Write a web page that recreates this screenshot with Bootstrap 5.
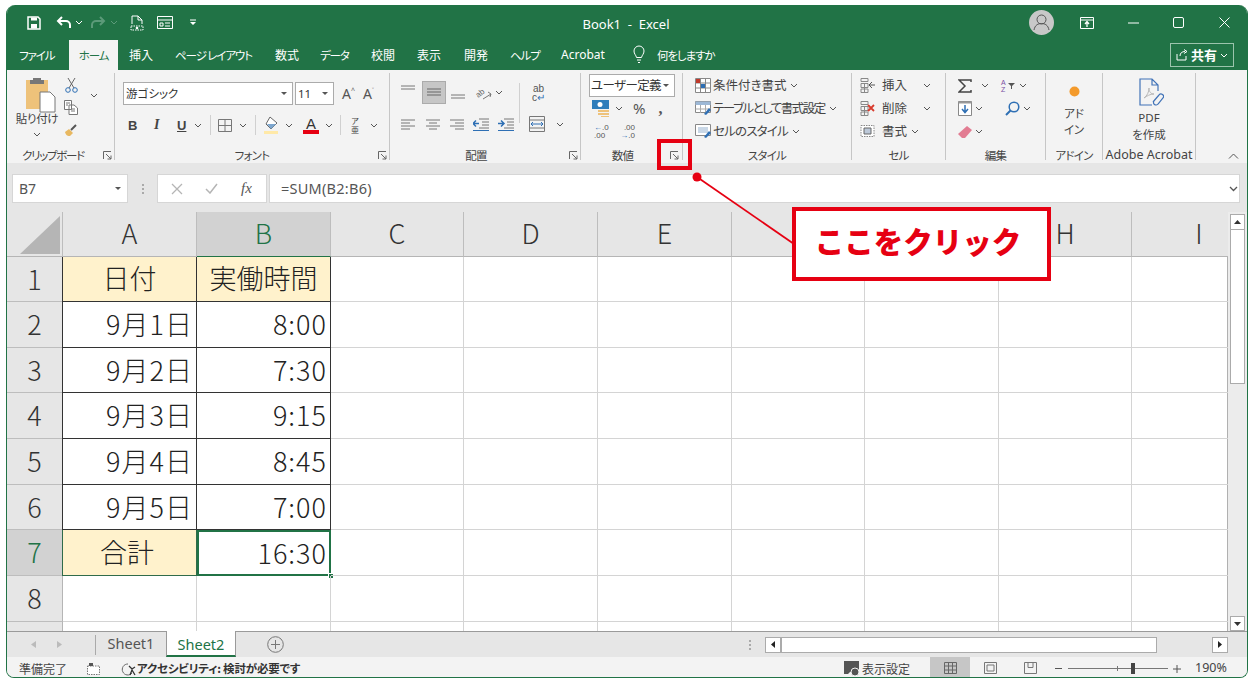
<!DOCTYPE html>
<html lang="ja"><head><meta charset="utf-8">
<link href="https://cdn.jsdelivr.net/npm/bootstrap@5.3.0/dist/css/bootstrap.min.css" rel="stylesheet">
<style>
html,body{margin:0;background:#fff;overflow:hidden}
body{width:1254px;height:686px;font-family:"Noto Sans CJK JP","Noto Sans",sans-serif;font-feature-settings:"palt";color:#333;position:relative}
svg{flex:none;display:block}
.l1{margin-left:1px}.l2{margin-left:2px}.l3{margin-left:3px}.l4{margin-left:4px}.l5{margin-left:5px}.l6{margin-left:6px}.l7{margin-left:7px}.l8{margin-left:8px}.l9{margin-left:9px}.l10{margin-left:10px}.l11{margin-left:11px}.l12{margin-left:12px}.l13{margin-left:13px}.l14{margin-left:14px}.l15{margin-left:15px}.l16{margin-left:16px}.l21{margin-left:21px}.l22{margin-left:22px}.l23{margin-left:23px}.l24{margin-left:24px}.l26{margin-left:26px}.l31{margin-left:31px}.l33{margin-left:33px}.l34{margin-left:34px}.l35{margin-left:35px}.l55{margin-left:55px}
.r2{margin-right:2px}.r5{margin-right:5px}.r6{margin-right:6px}.r7{margin-right:7px}.r8{margin-right:8px}.r10{margin-right:10px}.r12{margin-right:12px}.r13{margin-right:13px}.r14{margin-right:14px}.r17{margin-right:17px}
.t6{margin-top:6px}.t7{margin-top:7px}.t8{margin-top:8px}.t15{margin-top:15px}
.xn{font-family:"Noto Sans",sans-serif}.xl{font-family:"Liberation Sans",sans-serif}.xs{font-family:"Liberation Serif",serif}
.xchev{width:8px;height:5px}
.xwin{position:absolute;left:6px;top:5px;width:1242px;height:673px;border:1px solid #217346;border-top:0;border-radius:9px 9px 8px 8px;overflow:hidden;background:#e6e6e6;display:flex;flex-direction:column}
.xtitle{height:35px;background:#217346;color:#fff;flex:none;padding-left:19px}
.xqat{width:185px}
.xname{font-size:13px;width:818px;text-align:center;padding:5px 0 0 12px}
.xtabs{height:30px;background:#217346;color:#fff;font-size:12px;flex:none;padding-left:12px}
.xtab{display:block;line-height:30px;white-space:nowrap;flex:none}
.xtab-k{font-size:11.5px;letter-spacing:-1.1px}
.xtab.on{background:#f3f3f3;color:#217346;height:30px;width:49px;text-align:center}
.xtw50{width:50px}.xtw46{width:46px}.xtw100{width:100px}.xtw45{width:45px}.xtw51{width:51px}.xtw47{width:47px}.xtw72{width:72px}
.xbulb{width:12px;height:19px;margin-bottom:6px}
.xshare{width:64px;height:24px;border:1px solid #9cc4ad;font-size:13px;font-weight:700;margin:0 13px 3px auto;gap:3px;padding-left:5px}
.xrib{height:93px;background:#f3f3f3;flex:none;font-size:12.5px;color:#444;line-height:1}
.xg{position:relative;border-right:1px solid #c6c6c6;margin:3px 0 0;height:87px;flex:none;display:flex;flex-direction:column}
.xg1{width:108px}.xg2{width:275px;padding:9px 0 0 8px}.xg3{width:191px;padding:8px 0 0 11px}.xg4{width:102px;padding:1px 0 0 8px}.xg5{width:169px;padding:1px 0 0 12px}.xg6{width:94px;padding:1px 0 0 8px}.xg7{width:100px;padding:1px 0 0 12px}.xg8{width:57px;padding-top:13px;font-size:11.5px;line-height:16px;text-align:center}.xg9{width:93px;font-size:11.5px;line-height:16px;padding-top:5px;text-align:center}
.xglab{position:absolute;left:0;right:0;bottom:-3px;height:16px;line-height:16px;text-align:center;font-size:11.5px;color:#444;white-space:nowrap;letter-spacing:-.7px}
.xglab-clip{text-align:left;padding-left:15px;letter-spacing:-1.3px}.xglab-pr{padding-right:18px}.xglab-en{letter-spacing:0;font-size:12.5px}
.xlaunch{position:absolute;right:2px;bottom:0;width:9px;height:9px}.xlaunch3{right:3px}
.xrow{display:flex;align-items:center;height:23px;flex:none;white-space:nowrap}
.xrow2{margin-top:8px;height:24px}
.xfmt{font-family:"Liberation Sans",sans-serif;font-size:13px;font-weight:700;color:#444}
.xbox{background:#fff;border:1px solid #ababab;display:flex;align-items:center;height:23px;font-size:11.5px;color:#333;padding-left:2px;justify-content:space-between;padding-right:5px;white-space:nowrap;flex:none}
.xb170{width:170px}.xb39{width:39px;margin-left:2px}.xb86{width:86px;font-size:12.5px;padding-left:1px;letter-spacing:-.6px}
.xcaret{width:0;height:0;border-left:3px solid transparent;border-right:3px solid transparent;border-top:3px solid #555;display:block;flex:none}
.xsep{width:1px;height:20px;background:#d0d0d0;flex:none}
.xsep40{height:40px;margin:20px 0 0 16px}
.xico{display:flex;align-items:center;justify-content:center;flex:none;height:23px}
.xsel{background:#c6c6c6;border:1px solid #ababab;width:24px;margin-left:7px}
.xup{margin-bottom:6px}.xdn{margin:6px 0 0 5px}
.xaa{font-size:14px;color:#555}.xaa1{margin-left:8px;width:21px}.xaa sup{font-size:7px;top:-6px}
.xbb{margin-left:5px;width:26px}.xii{font-style:italic;width:23px;font-size:14px}.xuu{text-decoration:underline;width:17px}
.xcolor{width:16px;line-height:13px;font-size:15px;font-weight:400;color:#333;margin-right:6px}
.xcolor i{display:block;width:16px;height:4px;background:#e60012}
.xphon{font-family:"Noto Sans CJK JP",sans-serif;font-weight:400;font-size:8px;line-height:9px;width:10px;margin:0 10px 0 9px;text-align:center}
.xwrap{font-size:10px;line-height:9px;margin-left:12px;color:#555;text-align:center}.xblue{color:#2e6fb4}
.xpct{font-size:15px;margin-left:10px;color:#555}.xcomma{font-size:16px;font-weight:700;margin-left:13px;color:#555}
.xdec{font-size:8px;line-height:8px;color:#555}.xd1{margin-left:5px;width:25px}.xd2{text-align:right;width:16px}
.xk1{letter-spacing:-1.5px}.xk2{letter-spacing:-.8px}
.xaz{font-size:7px;line-height:7px;color:#7a4fa3;margin-left:12px;width:5px}
.xpaste{width:48px;margin-left:6px;flex:none}.xpicon{margin:2px 0 0 6px}.xptext{font-size:11.5px;white-space:nowrap;letter-spacing:-.3px}
.xcol20{width:20px}.xh64{height:64px}.xh45{height:45px}
.xdot{align-self:center}.xacro{align-self:center;margin-left:3px}
.xfbar{height:49px;flex:none;background:#e6e6e6;padding:11px 7px 9px 5px;gap:2px}
.xfield{background:#fff;border:1px solid #d6d6d6;height:29px;display:flex;align-items:center;color:#555;font-size:14px;flex:none}
.xfname{width:116px;padding:0 6px;justify-content:space-between}
.xfdots{width:25px;height:29px;gap:2px;flex:none}
.xdotm{width:2px;height:2px;background:#aaa;display:block}
.xfbtn{width:110px}.xfx{font-style:italic;margin-left:23px;font-size:15px;color:#555}
.xfval{flex:1;padding:0 1px 0 11px;justify-content:space-between;font-size:14.5px;letter-spacing:.25px}
.xsheetwrap{height:419px;flex:none;display:flex;overflow:hidden;background:#fff}
.xgrid{display:grid;grid-template-columns:56px 134px 134px 133px 134px 134px 133px 134px 133px 96px;grid-template-rows:45px 45px 46px 45px 46px 46px 45px 46px 46px 46px;width:1221px;flex:none;font-feature-settings:normal;border-right:1px solid #b0b0b0}
.xc{border-right:1px solid #d4d4d4;border-bottom:1px solid #d4d4d4;font-size:27px;font-weight:300;color:#222;display:flex;align-items:center;justify-content:flex-end;padding:0 4px 2px 0;line-height:1;white-space:nowrap;position:relative}
.xc:nth-child(10n){border-right:0}
.xh{background:#e6e6e6;color:#333;justify-content:center;padding:0 0 3px;border-color:#bdbdbd;border-bottom-color:#b5b5b5}
.xh.act{background:#d2d2d2;color:#217346;border-bottom:1px solid #217346}
.xhi{padding-left:38px}
.xrh{background:#e6e6e6;color:#333;justify-content:center;padding:0 0 2px;border-color:#bdbdbd;border-right:1px solid #b5b5b5}
.xrh.act{background:#d2d2d2;color:#217346;border-right:1px solid #217346}
.xhd{background:#fff2cc;justify-content:center;padding:0 0 3px;border:1px solid #333;border-left:0;border-top:0}
.xbd{border:1px solid #333;border-left:0;border-top:0;letter-spacing:1px;padding-right:3px}
.xfirst{box-shadow:-1px 0 0 #333}
.xtot{border-color:#2f6b4a;box-shadow:-1px 0 0 #2f6b4a;padding-right:5px}
.xactive{outline:2px solid #217346;outline-offset:-2px;border:0;letter-spacing:1px;padding-right:4px}
.xhandle{position:absolute;right:-3px;bottom:-3px;width:6px;height:6px;background:#217346;border:1px solid #fff}
.xcorner{background:#e6e6e6;border-right:1px solid #bdbdbd;border-bottom:1px solid #b5b5b5;position:relative}
.xtri{position:absolute;right:2px;bottom:2px;width:40px;height:38px}
.xvs{width:19px;flex:none;background:#ececec;display:flex;flex-direction:column;padding:2px 2px 0}
.xsb{background:#fff;border:1px solid #ababab;display:flex;align-items:center;justify-content:center;flex:none}
.xsb16{height:16px}.xsb15{height:15px;margin-top:auto}
.xvthumb{height:154px;background:#fff;border:1px solid #ababab;border-top:0;flex:none}
.xtabbar{height:26px;flex:none;background:#e6e6e6;border-top:1px solid #9a9a9a;font-size:14.5px;color:#555;position:relative}
.xvbar{width:1px;height:20px;background:#aaa;margin-left:33px;flex:none}
.xsheet{height:25px;line-height:23px;flex:none;text-align:center;width:70px}
.xsheet.on{background:#fff;color:#217346;border-left:1px solid #9a9a9a;border-right:1px solid #9a9a9a;border-bottom:2px solid #217346;margin-top:-1px;height:26px;line-height:26px}
.xdots3{margin-left:465px;gap:2px;flex:none}
.xhs{height:16px;background:#fff;border:1px solid #ababab;flex:none;display:flex;align-items:center;justify-content:center;width:16px}
.xhsb{width:376px}
.xstatus{flex:1;background:#f3f3f3;font-size:12px;color:#444;padding:2px 0 0 12px;white-space:nowrap}
.xw68{width:68px;flex:none}
.xacc{font-size:11.5px;flex:none;margin-left:-1px;width:162px;font-weight:700;color:#333;letter-spacing:-.2px}
.xdisp{margin-left:545px}
.xview{height:21px;margin-top:-2px;display:flex;align-items:center;justify-content:center;flex:none;width:40px}
.xview.on{background:#c6c6c6}
.xzoom{width:100px;height:13px;margin-left:6px;flex:none}
.xzl{display:block;width:100px;height:1px;background:#777}
.xzt{left:49px;top:4px;width:1px;height:5px;background:#777}
.xzh{left:63px;top:1px;width:4px;height:11px;background:#444}
.xpctz{flex:none;margin-left:14px;font-size:12.5px}
.xcallout{position:absolute;left:792px;top:207px;width:259px;height:74px;border:4px solid #e60012;background:#fff;color:#e60012;font-size:29.5px;font-weight:900;display:flex;align-items:center;justify-content:center;padding:0 7px 7px 0;font-feature-settings:normal}
.xred{position:absolute;left:657px;top:139px;width:35px;height:31px;border:4px solid #e60012}
.xline{position:absolute;left:690px;top:170px;width:110px;height:80px}
</style></head><body>
<svg width="0" height="0" class="position-absolute"><defs>
<symbol id="ch" viewBox="0 0 8 5"><path d="M1 1l3 3 3-3" fill="none" stroke="#555"/></symbol>
<symbol id="chw" viewBox="0 0 8 5"><path d="M1 1l3 3 3-3" fill="none" stroke="#fff"/></symbol>
<symbol id="chg" viewBox="0 0 8 5"><path d="M1 1l3 3 3-3" fill="none" stroke="#5c9a79"/></symbol>
<symbol id="la" viewBox="0 0 9 9"><path d="M.5 8V.5H8M3 3l5 5M8 4.500V8H4.500" fill="none" stroke="#666"/></symbol>
</defs></svg>
<div class="xwin">
 <div class="xtitle d-flex align-items-center">
  <div class="xqat d-flex align-items-center">
   <svg class="r14" width="16" height="16" viewBox="0 0 16 16"><path d="M2 2h10l2 2v10H2z" fill="none" stroke="#fff" stroke-width="1.500"/><path d="M5 2.500h6v3H5zM5 9h6v4.500H5z" fill="#fff"/></svg>
   <svg width="18" height="14" viewBox="0 0 18 14"><path d="M6 1L2 5l4 4M2.500 5H10a4 4 0 0 1 4 4v3" fill="none" stroke="#fff" stroke-width="2"/></svg>
   <svg class="xchev l1 r5"><use href="#chw"/></svg>
   <svg width="18" height="14" viewBox="0 0 18 14"><path d="M12 1l4 4-4 4M15.500 5H8a4 4 0 0 0-4 4v3" fill="none" stroke="#5c9a79" stroke-width="2"/></svg>
   <svg class="xchev l4 r12"><use href="#chg"/></svg>
   <svg class="r13" width="14" height="16" viewBox="0 0 14 16"><path d="M2 9V1h6l4 4v4M8 1v4h4" fill="none" stroke="#fff"/><path d="M1 11h12v4H1z" fill="none" stroke="#fff" stroke-dasharray="1.500 1"/><circle cx="7" cy="13" r="1.300" fill="#fff"/></svg>
   <svg class="r17" width="16" height="13" viewBox="0 0 16 13"><path d="M.5.500h15v12H.5z" fill="none" stroke="#fff"/><path d="M.5 4h15M3 7h3v3H3zM8 7h5M8 10h5" fill="none" stroke="#fff"/></svg>
   <svg width="6" height="7" viewBox="0 0 6 7"><path d="M0 .5h6v1H0zM0 3h6l-3 3z" fill="#fff"/></svg>
  </div>
  <div class="xname xn">Book1&nbsp; -&nbsp; Excel</div>
  <svg width="25" height="25" viewBox="0 0 25 25"><circle cx="12.500" cy="12.500" r="12.500" fill="#c8c8c8"/><circle cx="12.500" cy="9.500" r="4.500" fill="none" stroke="#555"/><path d="M5 20c1-5 4-6.500 7.500-6.500S19 15 20 20" fill="none" stroke="#555"/></svg>
  <svg class="l26" width="14" height="12" viewBox="0 0 14 12"><path d="M.5.500h13v11H.5zM.5 3h13" fill="none" stroke="#fff"/><path d="M7 10V5M5 7l2-2.500L9 7" fill="none" stroke="#fff" stroke-width="1.300"/></svg>
  <svg class="l34" width="11" height="2" viewBox="0 0 11 2"><path d="M0 1h11" stroke="#fff"/></svg>
  <svg class="l34" width="11" height="11" viewBox="0 0 11 11"><rect x=".5" y=".5" width="10" height="10" rx="1.500" fill="none" stroke="#fff"/></svg>
  <svg class="l35" width="11" height="11" viewBox="0 0 11 11"><path d="M.5.500l10 10M10.500.500l-10 10" stroke="#fff"/></svg>
 </div>
 <div class="xtabs d-flex align-items-end">
  <span class="xtab xtab-k xtw50">ファイル</span>
  <span class="xtab on xtab-k">ホーム</span>
  <span class="xtab l11 xtw46">挿入</span>
  <span class="xtab xtab-k xtw100">ページ レイアウト</span>
  <span class="xtab xtw45">数式</span>
  <span class="xtab xtab-k xtw51">データ</span>
  <span class="xtab xtw46">校閲</span>
  <span class="xtab xtw47">表示</span>
  <span class="xtab xtw46">開発</span>
  <span class="xtab xtab-k xtw51">ヘルプ</span>
  <span class="xtab xtw72 xn">Acrobat</span>
  <svg class="xbulb" viewBox="0 0 12 19"><path d="M3.500 12.500C3 10 1 9 1 6a5 5 0 0 1 10 0c0 3-2 4-2.500 6.500zM4 15h4M5 17.500h2" fill="none" stroke="#fff"/></svg>
  <span class="xtab xtab-k l12">何をしますか</span>
  <div class="xshare d-flex align-items-center"><svg width="12" height="12" viewBox="0 0 12 12"><path d="M1 5v6h9V7M4 7c0-3 2-4.500 5-4.500M8 .5l3 2-3 2" fill="none" stroke="#fff"/></svg>共有<svg class="xchev"><use href="#chw"/></svg></div>
 </div>
 <div class="xrib d-flex">
  <div class="xg xg1">
   <div class="d-flex xh64">
    <div class="xpaste d-flex flex-column align-items-center">
     <svg class="xpicon" width="31" height="38" viewBox="0 0 31 38"><path d="M1 5h22v29H1z" fill="#eec27a"/><path d="M8 3h8v2h3v4H5V5h3z" fill="#777"/><path d="M15 17h10l5 5v15H15z" fill="#fff" stroke="#777"/></svg>
     <span class="xptext">貼り付け</span>
     <svg class="xchev t7"><use href="#ch"/></svg>
    </div>
    <div class="d-flex flex-column xcol20">
     <div class="xico"><svg width="13" height="16" viewBox="0 0 13 16"><path d="M3 1l6 10M10 1L4 11" stroke="#666" fill="none"/><circle cx="3" cy="13" r="2.300" fill="none" stroke="#2e6fb4"/><circle cx="10" cy="13" r="2.300" fill="none" stroke="#2e6fb4"/></svg></div>
     <div class="xico"><svg width="14" height="15" viewBox="0 0 14 15"><path d="M.5.500h7v9h-7zM5 5h5l3.500 3v6.500H5z" fill="#fff" stroke="#777"/><path d="M2 3h4M2 5h2M7 9h4M7 11h4" stroke="#777"/></svg></div>
     <div class="xico"><svg width="14" height="13" viewBox="0 0 14 13"><path d="M1 8l4-3 4 4-3 3c-2 0-4 0-5-4z" fill="#e8b860"/><path d="M7 6l5-5" stroke="#555" stroke-width="2"/></svg></div>
    </div>
    <div class="d-flex align-items-center l9 xh45"><svg class="xchev"><use href="#ch"/></svg></div>
   </div>
   <div class="xglab xglab-clip">クリップボード</div>
   <svg class="xlaunch"><use href="#la"/></svg>
  </div>
  <div class="xg xg2">
   <div class="xrow">
    <div class="xbox xb170">游ゴシック<span class="xcaret"></span></div>
    <div class="xbox xb39 xn">11<span class="xcaret"></span></div>
    <span class="xaa xaa1 xn">A<sup>^</sup></span>
    <span class="xaa xn">A<sup>˅</sup></span>
   </div>
   <div class="xrow xrow2 xfmt">
    <span class="xbb">B</span><span class="xs xii">I</span><span class="xuu">U</span>
    <svg class="xchev r8"><use href="#ch"/></svg><span class="xsep"></span>
    <svg class="l7 r7" width="14" height="13" viewBox="0 0 14 13"><path d="M.5.500h13v12H.5zM7 .5v12M.5 6.500h13" fill="none" stroke="#777"/></svg>
    <svg class="xchev r8"><use href="#ch"/></svg><span class="xsep"></span>
    <svg class="l8 r5" width="16" height="18" viewBox="0 0 16 18"><path d="M6 1l7 6-6 6-5-5z" fill="#fff" stroke="#666"/><path d="M3 8h9l-5 5z" fill="#7da7d0"/><path d="M0 15h14v3H0z" fill="#ffe9a8"/></svg>
    <svg class="xchev r10"><use href="#ch"/></svg>
    <span class="d-flex flex-column align-items-center xcolor">A<i></i></span>
    <svg class="xchev r7"><use href="#ch"/></svg><span class="xsep"></span>
    <span class="xphon">ア<br>亜</span>
    <svg class="xchev"><use href="#ch"/></svg>
   </div>
   <div class="xglab">フォント</div>
   <svg class="xlaunch"><use href="#la"/></svg>
  </div>
  <div class="xg xg3">
   <div class="xrow">
    <svg class="xup" width="14" height="9" viewBox="0 0 14 9"><path d="M0 1h14M0 4h14" stroke="#777"/></svg>
    <span class="xico xsel"><svg width="14" height="9" viewBox="0 0 14 9"><path d="M0 1h14M0 4h14M0 7h14" stroke="#666"/></svg></span>
    <svg class="xdn" width="14" height="9" viewBox="0 0 14 9"><path d="M0 4h14M0 7h14" stroke="#777"/></svg>
    <svg class="l10" width="17" height="15" viewBox="0 0 17 15"><text x="1" y="11" font-size="8" fill="#666" font-family="Liberation Sans" transform="rotate(-40 5 9)">ab</text><path d="M8 14l8-5M13 7l3 2-1 3" stroke="#777" fill="none"/></svg>
    <svg class="xchev l3"><use href="#ch"/></svg>
    <span class="xsep xsep40"></span>
    <span class="xwrap xl">ab<br>c<span class="xblue">↵</span></span>
   </div>
   <div class="xrow xrow2">
    <svg width="14" height="11" viewBox="0 0 14 11"><path d="M0 1h14M0 4h9M0 7h14M0 10h9" stroke="#777"/></svg>
    <svg class="l11" width="14" height="11" viewBox="0 0 14 11"><path d="M0 1h14M3 4h8M0 7h14M3 10h8" stroke="#777"/></svg>
    <svg class="l10" width="14" height="11" viewBox="0 0 14 11"><path d="M0 1h14M5 4h9M0 7h14M5 10h9" stroke="#777"/></svg>
    <svg class="l9" width="16" height="13" viewBox="0 0 16 13"><path d="M6 1h10M9 4h7M9 7h7M6 10h10" stroke="#777"/><path d="M0 5.500h6M3 2.500L0 5.500l3 3" fill="none" stroke="#2e6fb4" stroke-width="1.500"/><path d="M0 12.500h16" stroke="#2e6fb4"/></svg>
    <svg class="l9" width="16" height="13" viewBox="0 0 16 13"><path d="M6 1h10M9 4h7M9 7h7M6 10h10" stroke="#777"/><path d="M0 5.500h6M3 2.500l3 3-3 3" fill="none" stroke="#2e6fb4" stroke-width="1.500"/><path d="M0 12.500h16" stroke="#2e6fb4"/></svg>
    <svg class="l15" width="16" height="16" viewBox="0 0 16 16"><path d="M.5.500h15v15H.5zM.5 4h15M.5 12h15" fill="none" stroke="#777"/><path d="M2 8h12M4 6L2 8l2 2M12 6l2 2-2 2" fill="none" stroke="#2e6fb4"/></svg>
    <svg class="xchev l11"><use href="#ch"/></svg>
   </div>
   <div class="xglab xglab-pr">配置</div>
   <svg class="xlaunch"><use href="#la"/></svg>
  </div>
  <div class="xg xg4">
   <div class="xbox xb86">ユーザー定義<span class="xcaret"></span></div>
   <div class="xrow">
    <svg class="l3" width="17" height="17" viewBox="0 0 17 17"><path d="M0 0h17v9H0z" fill="#2e7dbb"/><circle cx="8" cy="4.500" r="2.500" fill="#fff"/><path d="M6 10h11v2H6zM6 13h11v2H6zM9 16h8v1H9z" fill="#eec27a"/></svg>
    <svg class="xchev l6"><use href="#ch"/></svg>
    <span class="xpct xn">%</span>
    <span class="xcomma xs">,</span>
   </div>
   <div class="xrow xdec xl">
    <span class="xd1"><span class="xblue">←</span>.0<br>.00</span><span class="xd2">.00<br><span class="xblue">→</span>.0</span>
   </div>
   <div class="xglab xglab-pr">数値</div>
   <svg class="xlaunch xlaunch3"><use href="#la"/></svg>
  </div>
  <div class="xg xg5">
   <div class="xrow"><svg class="r2" width="16" height="15" viewBox="0 0 16 15"><path d="M.5.500h15v14H.5zM.5 5h15M.5 10h15M5.500.5v14M10.500.5v14" fill="#fff" stroke="#888"/><path d="M1 1h4v4H1z" fill="#c0392b"/><path d="M6 6h4v4H6z" fill="#2e6fb4"/></svg>条件付き書式<svg class="xchev l4"><use href="#ch"/></svg></div>
   <div class="xrow"><svg class="r2" width="16" height="15" viewBox="0 0 16 15"><path d="M.5.500h15v11H.5z" fill="#fff" stroke="#888"/><path d="M.5.500h15V4H.5z" fill="#9db8d6"/><path d="M.5 8h15M5.500 4v8M10.500 4v8" stroke="#aaa"/><path d="M9 13l5-6 2 2-5 5z" fill="#2e6fb4"/></svg><span class="xk1">テーブルとして書式設定</span><svg class="xchev l4"><use href="#ch"/></svg></div>
   <div class="xrow"><svg class="r2" width="16" height="15" viewBox="0 0 16 15"><path d="M.5.500h15v11H.5z" fill="#fff" stroke="#888"/><path d="M3 3h10v6H3z" fill="#c9d7e6"/><path d="M9 13l5-6 2 2-5 5z" fill="#2e6fb4"/></svg><span class="xk2">セルのスタイル</span><svg class="xchev l4"><use href="#ch"/></svg></div>
   <div class="xglab">スタイル</div>
  </div>
  <div class="xg xg6">
   <div class="xrow"><svg class="r7" width="15" height="15" viewBox="0 0 15 15"><path d="M1 .5h7v3H1zM1 5.500h7v4H1zM1 11h7v3.500H1zM4.500 5.500v9" fill="none" stroke="#888"/><path d="M9 7h6M12 4L9 7l3 3" fill="none" stroke="#555"/></svg>挿入<svg class="xchev l16"><use href="#ch"/></svg></div>
   <div class="xrow"><svg class="r7" width="15" height="15" viewBox="0 0 15 15"><path d="M1 .5h7v3H1zM1 5.500h7v4H1zM1 11h7v3.500H1zM4.500 5.500v9" fill="none" stroke="#888"/><path d="M8 4l6 6M14 4l-6 6" stroke="#d83b2d" stroke-width="1.800"/></svg>削除<svg class="xchev l16"><use href="#ch"/></svg></div>
   <div class="xrow"><svg class="r7" width="15" height="15" viewBox="0 0 15 15"><path d="M1 1.500h13v11H1z" fill="#fff" stroke="#888" stroke-dasharray="1.500 1"/><path d="M4 4h7v6H4z" fill="#bcc8d8" stroke="#666"/></svg>書式<svg class="xchev l4"><use href="#ch"/></svg></div>
   <div class="xglab">セル</div>
  </div>
  <div class="xg xg7">
   <div class="xrow"><svg width="14" height="14" viewBox="0 0 14 14"><path d="M13 3V1H1l6 6-6 6h12v-2" fill="none" stroke="#444" stroke-width="1.500"/></svg><svg class="xchev l9"><use href="#ch"/></svg>
    <span class="xaz xl">A<br>Z</span><svg class="l2" width="7" height="6" viewBox="0 0 7 6"><path d="M0 0h7L4 3v3H3V3z" fill="#555"/></svg><svg class="xchev l4"><use href="#ch"/></svg></div>
   <div class="xrow"><svg width="14" height="15" viewBox="0 0 14 15"><path d="M.5.500h13v14H.5z" fill="#fff" stroke="#888"/><path d="M.5.500h13v2H.5z" fill="#999"/><path d="M7 4v7M4 8l3 3.500L10 8" fill="none" stroke="#2e6fb4" stroke-width="1.500"/></svg><svg class="xchev l3"><use href="#ch"/></svg>
    <svg class="l22" width="15" height="15" viewBox="0 0 15 15"><circle cx="9" cy="6" r="4.800" fill="none" stroke="#2e6fb4" stroke-width="1.500"/><path d="M5.500 9.500L1 14" stroke="#2e6fb4" stroke-width="2"/></svg><svg class="xchev l3"><use href="#ch"/></svg></div>
   <div class="xrow"><svg width="14" height="12" viewBox="0 0 14 12"><path d="M9 0l5 4-7 8H4L0 8z" fill="#e27c92"/></svg><svg class="xchev l3"><use href="#ch"/></svg></div>
   <div class="xglab">編集</div>
  </div>
  <div class="xg xg8">
   <svg class="xdot" width="11" height="11" viewBox="0 0 11 11"><circle cx="5.500" cy="5.500" r="5" fill="#f39a2b"/></svg>
   <div class="t8">アド<br>イン</div>
   <div class="xglab">アドイン</div>
  </div>
  <div class="xg xg9">
   <svg class="xacro" width="26" height="32" viewBox="0 0 26 32"><path d="M14 27H2V1h12l6 6v6M14 1v6h6" fill="none" stroke="#4173b8" stroke-width="1.200"/><path d="M6 20c3-2 5-6 5-10 0 4 2 6 5 6-4 0-7 2-10 4z" fill="none" stroke="#b8b8b8"/><path d="M15 24l6-7a2.500 2.500 0 0 1 4 3l-5 6a2.500 2.500 0 0 1-4-3" fill="none" stroke="#4173b8" stroke-width="1.200"/></svg>
   <div class="xn">PDF</div><div>を作成</div>
   <div class="xglab xglab-en xn">Adobe Acrobat</div>
  </div>
  <div class="flex-grow-1 d-flex align-items-end justify-content-end pb-1 pe-2"><svg width="11" height="6" viewBox="0 0 11 6"><path d="M1 5.500l4.500-4.500 4.500 4.500" fill="none" stroke="#555"/></svg></div>
 </div>
 <div class="xfbar d-flex align-items-start xn">
  <div class="xfield xfname">B7<span class="xcaret"></span></div>
  <div class="d-flex flex-column align-items-center justify-content-center xfdots"><span class="xdotm"></span><span class="xdotm"></span><span class="xdotm"></span></div>
  <div class="xfield xfbtn">
   <svg class="l13" width="12" height="12" viewBox="0 0 12 12"><path d="M1 1l10 10M11 1L1 11" stroke="#b5b5b5" stroke-width="1.300"/></svg>
   <svg class="l22" width="13" height="11" viewBox="0 0 13 11"><path d="M1 6l4 4 7-9" fill="none" stroke="#b5b5b5" stroke-width="1.500"/></svg>
   <span class="xs xfx">fx</span>
  </div>
  <div class="xfield xfval">=SUM(B2:B6)<svg width="9" height="6" viewBox="0 0 9 6"><path d="M1 1l3.500 3.500L8 1" fill="none" stroke="#555" stroke-width="1.300"/></svg></div>
 </div>
 <div class="xsheetwrap">
  <div class="xgrid">
   <div class="xcorner"><svg class="xtri" viewBox="0 0 40 38"><path d="M40 0v38H0z" fill="#b5b5b5"/></svg></div>
   <div class="xc xh">A</div><div class="xc xh act">B</div><div class="xc xh">C</div><div class="xc xh">D</div><div class="xc xh">E</div><div class="xc xh"></div><div class="xc xh"></div><div class="xc xh">H</div><div class="xc xh xhi">I</div>
   <div class="xc xrh">1</div><div class="xc xhd xfirst">日付</div><div class="xc xhd">実働時間</div><div class="xc"></div><div class="xc"></div><div class="xc"></div><div class="xc"></div><div class="xc"></div><div class="xc"></div><div class="xc"></div>
   <div class="xc xrh">2</div><div class="xc xbd xfirst">9月1日</div><div class="xc xbd">8:00</div><div class="xc"></div><div class="xc"></div><div class="xc"></div><div class="xc"></div><div class="xc"></div><div class="xc"></div><div class="xc"></div>
   <div class="xc xrh">3</div><div class="xc xbd xfirst">9月2日</div><div class="xc xbd">7:30</div><div class="xc"></div><div class="xc"></div><div class="xc"></div><div class="xc"></div><div class="xc"></div><div class="xc"></div><div class="xc"></div>
   <div class="xc xrh">4</div><div class="xc xbd xfirst">9月3日</div><div class="xc xbd">9:15</div><div class="xc"></div><div class="xc"></div><div class="xc"></div><div class="xc"></div><div class="xc"></div><div class="xc"></div><div class="xc"></div>
   <div class="xc xrh">5</div><div class="xc xbd xfirst">9月4日</div><div class="xc xbd">8:45</div><div class="xc"></div><div class="xc"></div><div class="xc"></div><div class="xc"></div><div class="xc"></div><div class="xc"></div><div class="xc"></div>
   <div class="xc xrh">6</div><div class="xc xbd xfirst">9月5日</div><div class="xc xbd">7:00</div><div class="xc"></div><div class="xc"></div><div class="xc"></div><div class="xc"></div><div class="xc"></div><div class="xc"></div><div class="xc"></div>
   <div class="xc xrh act">7</div><div class="xc xhd xtot">合計</div><div class="xc xactive">16:30<span class="xhandle"></span></div><div class="xc"></div><div class="xc"></div><div class="xc"></div><div class="xc"></div><div class="xc"></div><div class="xc"></div><div class="xc"></div>
   <div class="xc xrh">8</div><div class="xc"></div><div class="xc"></div><div class="xc"></div><div class="xc"></div><div class="xc"></div><div class="xc"></div><div class="xc"></div><div class="xc"></div><div class="xc"></div>
   <div class="xc xrh"></div><div class="xc"></div><div class="xc"></div><div class="xc"></div><div class="xc"></div><div class="xc"></div><div class="xc"></div><div class="xc"></div><div class="xc"></div><div class="xc"></div>
  </div>
  <div class="xvs">
   <div class="xsb xsb16"><svg width="7" height="4" viewBox="0 0 7 4"><path d="M3.500 0L7 4H0z" fill="#333"/></svg></div>
   <div class="xvthumb"></div>
   <div class="xsb xsb15"><svg width="7" height="4" viewBox="0 0 7 4"><path d="M0 0h7L3.500 4z" fill="#333"/></svg></div>
  </div>
 </div>
 <div class="xtabbar d-flex align-items-center xn">
  <svg class="l24" width="5" height="7" viewBox="0 0 5 7"><path d="M5 0v7L0 3.500z" fill="#bbb"/></svg>
  <svg class="l21" width="5" height="7" viewBox="0 0 5 7"><path d="M0 0v7l5-3.500z" fill="#bbb"/></svg>
  <span class="xvbar"></span>
  <span class="xsheet">Sheet1</span>
  <span class="xsheet on">Sheet2</span>
  <svg class="l31" width="17" height="17" viewBox="0 0 17 17"><circle cx="8.500" cy="8.500" r="7.800" fill="none" stroke="#777"/><path d="M8.500 4v9M4 8.500h9" stroke="#777"/></svg>
  <span class="d-flex flex-column xdots3"><span class="xdotm"></span><span class="xdotm"></span><span class="xdotm"></span></span>
  <span class="xhs l14"><svg width="4" height="7" viewBox="0 0 4 7"><path d="M4 0v7L0 3.500z" fill="#222"/></svg></span>
  <span class="xhs xhsb"></span>
  <span class="xhs l55"><svg width="4" height="7" viewBox="0 0 4 7"><path d="M0 0v7l4-3.500z" fill="#222"/></svg></span>
 </div>
 <div class="xstatus d-flex align-items-center">
  <span class="xw68">準備完了</span>
  <svg width="13" height="12" viewBox="0 0 13 12"><path d="M.5 3h12v8.500H.5z" fill="#fff" stroke="#777" stroke-dasharray="1.500 1"/><path d="M2 0h4v3H2z" fill="#555"/></svg>
  <svg class="l21" width="17" height="14" viewBox="0 0 17 14"><path d="M7 2a5.500 5.500 0 1 0 4 9" fill="none" stroke="#666"/><path d="M8 4l3 3 3-2M9 13l2-5 3 5" fill="none" stroke="#333" stroke-width="1.300"/></svg>
  <b class="xacc">アクセシビリティ: 検討が必要です</b>
  <svg class="xdisp" width="18" height="16" viewBox="0 0 18 16"><path d="M0 0h15v11H6l-2 2H0z" fill="#555"/><circle cx="11" cy="11" r="4" fill="#555" stroke="#f3f3f3"/></svg>
  <span class="xw68">表示設定</span>
  <span class="xview on"><svg width="13" height="12" viewBox="0 0 13 12"><path d="M.5.500h12v11H.5zM4.500.5v11M8.500.5v11M.5 4h12M.5 8h12" fill="none" stroke="#666"/></svg></span>
  <span class="xview"><svg width="13" height="12" viewBox="0 0 13 12"><path d="M.5.500h12v11H.5zM3 3h7v6H3z" fill="none" stroke="#777"/></svg></span>
  <span class="xview"><svg width="13" height="12" viewBox="0 0 13 12"><path d="M.5.500h12v11H.5zM4 .5v5h5v-5" fill="none" stroke="#777"/></svg></span>
  <svg class="l5" width="7" height="1" viewBox="0 0 7 1"><path d="M0 .5h7" stroke="#555"/></svg>
  <span class="d-flex align-items-center position-relative xzoom"><span class="xzl"></span><span class="position-absolute xzt"></span><span class="position-absolute xzh"></span></span>
  <svg class="l5" width="8" height="8" viewBox="0 0 8 8"><path d="M4 0v8M0 4h8" stroke="#555"/></svg>
  <span class="xpctz xn">190%</span>
 </div>
</div>
<svg class="xline" viewBox="0 0 110 80"><circle cx="7" cy="7" r="4.500" fill="#e60012"/><path d="M7 7l97 67" stroke="#e60012" stroke-width="1.800" fill="none"/></svg>
<div class="xred"></div>
<div class="xcallout">ここをクリック</div>
<script src="https://cdn.jsdelivr.net/npm/bootstrap@5.3.0/dist/js/bootstrap.bundle.min.js"></script>
</body></html>
